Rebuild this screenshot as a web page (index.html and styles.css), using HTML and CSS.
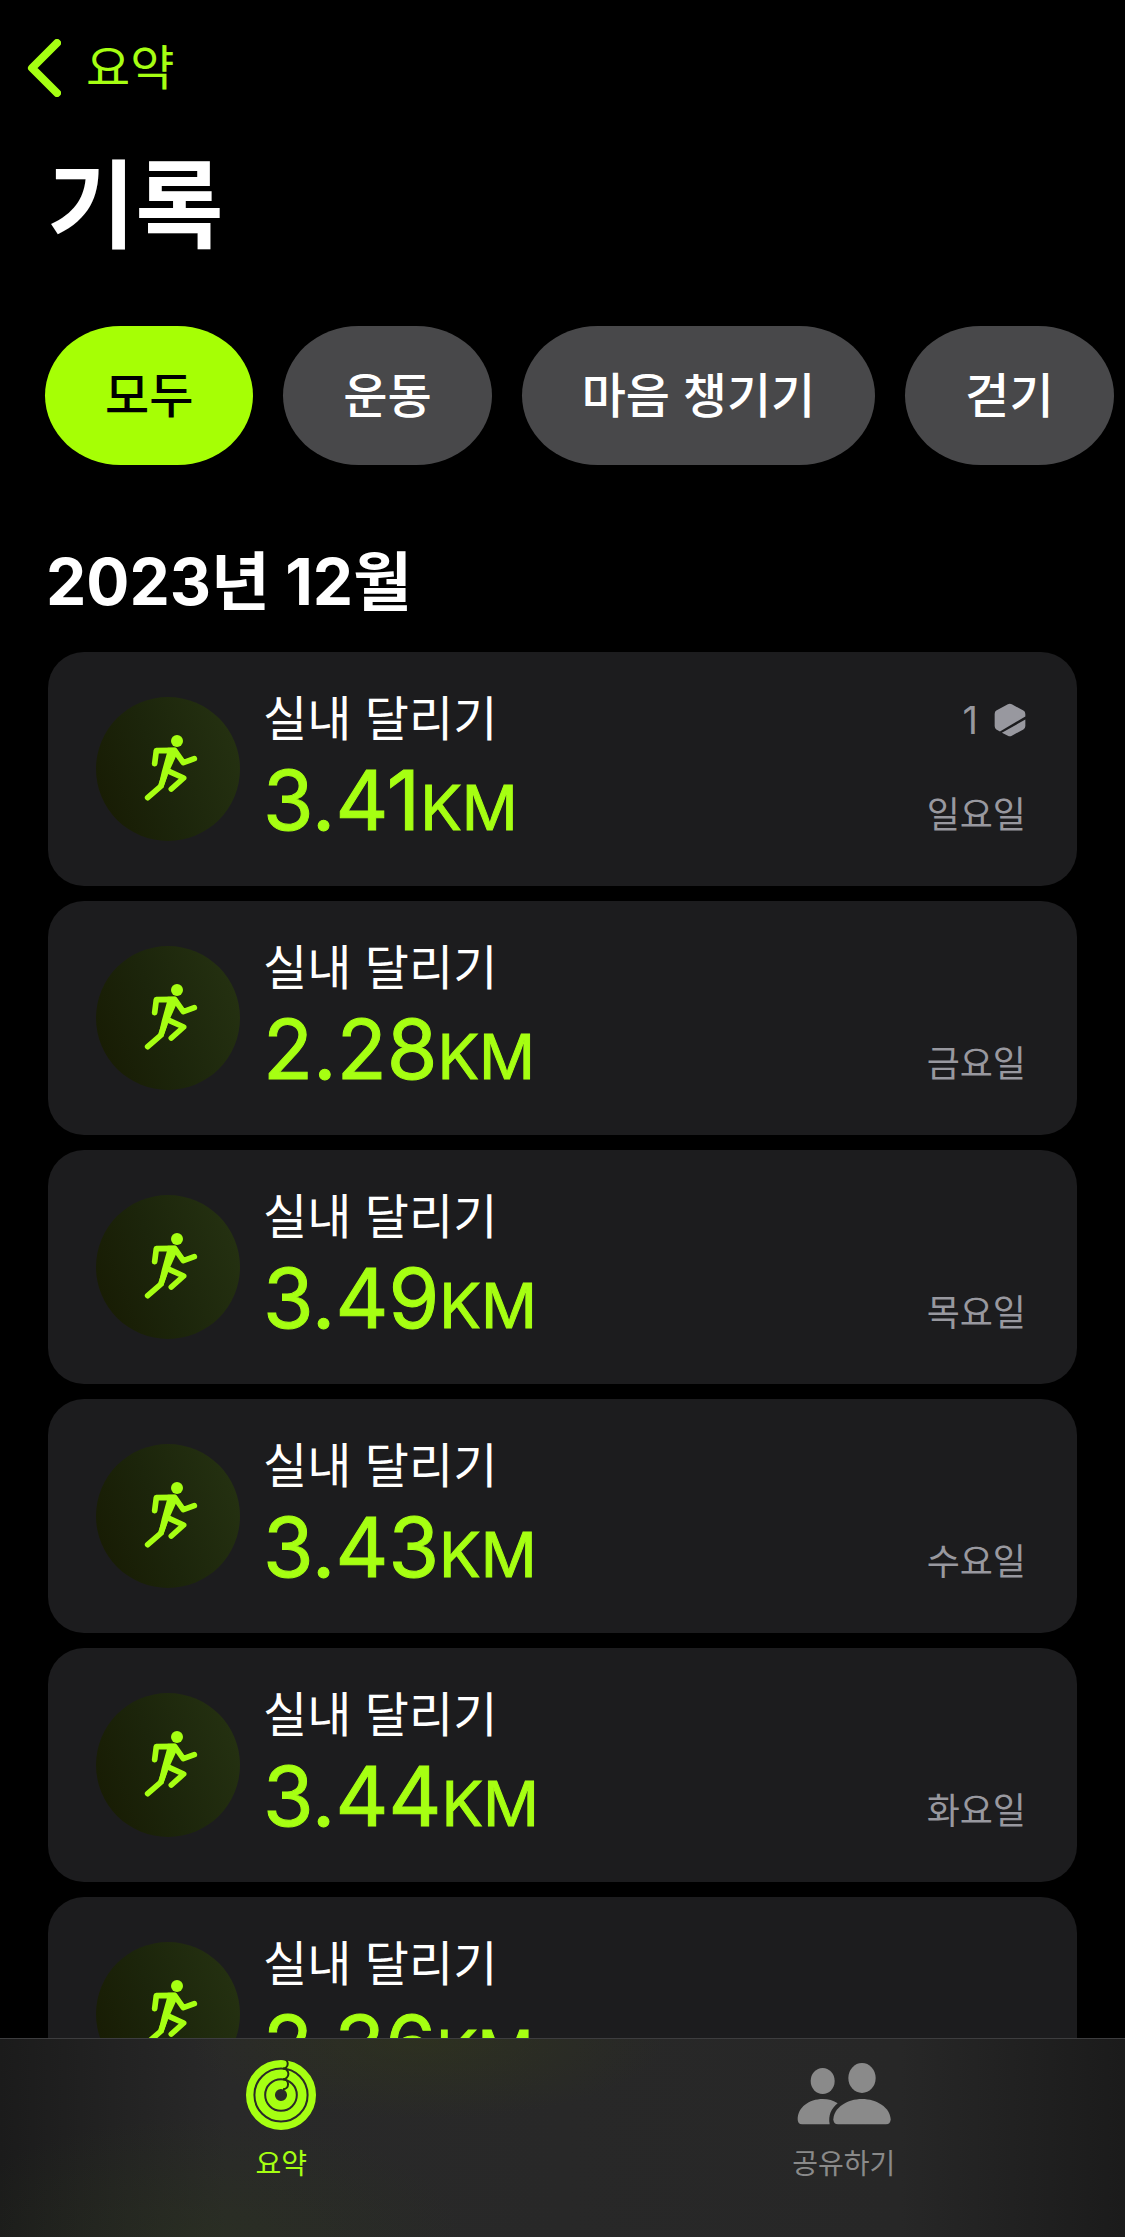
FILE: index.html
```
<!DOCTYPE html>
<html lang="ko">
<head>
    <meta charset="UTF-8">
    <meta name="viewport" content="width=device-width, initial-scale=1.0">
    <title>기록</title>
    <link rel="stylesheet" href="styles.css">
</head>
<body>
    <!-- shared icons -->
    <svg class="sprite" aria-hidden="true">
        <symbol id="runner" viewBox="9 72 210 210">
            <circle cx="141" cy="93" r="18"/>
            <path d="M113 113H137L145 124L115 190L100 234L86 225L95 186L111 128Z"/>
            <path class="limb" d="M74 161L79 122L134 121L160 158L193 146M104 196L92 229L53 263M112 182L161 204L124 237"/>
        </symbol>
    </svg>

    <div class="app">
        <main class="content">
            <nav class="nav">
                <a href="#summary" class="back">
                    <svg class="chevron" viewBox="0 0 34 58"><path d="M30 4L5 29L30 54"/></svg>
                    <span>요약</span>
                </a>
            </nav>

            <h1 class="title">기록</h1>

            <div class="filters">
                <button type="button" class="chip active">모두</button>
                <button type="button" class="chip">운동</button>
                <button type="button" class="chip">마음 챙기기</button>
                <button type="button" class="chip">걷기</button>
            </div>

            <h2 class="month">2023년 12월</h2>

            <ul class="list">
                <li class="card">
                    <div class="icon"><svg viewBox="0 0 70 70"><use href="#runner"/></svg></div>
                    <div class="info">
                        <p class="name">실내 달리기</p>
                        <p class="distance">3.41<span class="unit">KM</span></p>
                    </div>
                    <div class="meta">
                        <span class="award">1
                            <svg viewBox="0 0 97 103">
                                <path d="M42 4Q48 0 54 4L89 23Q95 26 95 33V41L18 86L7 80Q2 77 2 70V33Q2 26 7 23Z"/>
                                <path d="M95 50V70Q95 77 89 80L54 99Q48 103 42 99L24 90Z"/>
                            </svg>
                        </span>
                        <span class="day">일요일</span>
                    </div>
                </li>
                <li class="card">
                    <div class="icon"><svg viewBox="0 0 70 70"><use href="#runner"/></svg></div>
                    <div class="info">
                        <p class="name">실내 달리기</p>
                        <p class="distance">2.28<span class="unit">KM</span></p>
                    </div>
                    <div class="meta"><span class="day">금요일</span></div>
                </li>
                <li class="card">
                    <div class="icon"><svg viewBox="0 0 70 70"><use href="#runner"/></svg></div>
                    <div class="info">
                        <p class="name">실내 달리기</p>
                        <p class="distance">3.49<span class="unit">KM</span></p>
                    </div>
                    <div class="meta"><span class="day">목요일</span></div>
                </li>
                <li class="card">
                    <div class="icon"><svg viewBox="0 0 70 70"><use href="#runner"/></svg></div>
                    <div class="info">
                        <p class="name">실내 달리기</p>
                        <p class="distance">3.43<span class="unit">KM</span></p>
                    </div>
                    <div class="meta"><span class="day">수요일</span></div>
                </li>
                <li class="card">
                    <div class="icon"><svg viewBox="0 0 70 70"><use href="#runner"/></svg></div>
                    <div class="info">
                        <p class="name">실내 달리기</p>
                        <p class="distance">3.44<span class="unit">KM</span></p>
                    </div>
                    <div class="meta"><span class="day">화요일</span></div>
                </li>
                <li class="card">
                    <div class="icon"><svg viewBox="0 0 70 70"><use href="#runner"/></svg></div>
                    <div class="info">
                        <p class="name">실내 달리기</p>
                        <p class="distance">2.36<span class="unit">KM</span></p>
                    </div>
                    <div class="meta"></div>
                </li>
            </ul>
        </main>

        <footer class="tabbar">
            <a href="#summary" class="tab active">
                <svg class="rings" viewBox="37 47 208 208">
                    <circle cx="141" cy="151" r="93" stroke-width="22"/>
                    <circle cx="141" cy="151" r="63" stroke-width="26"/>
                    <circle cx="141" cy="151" r="31" stroke-width="26"/>
                    <path d="M147 44A14 14 0 0 1 147 72A16 16 0 0 1 147 104A15 15 0 0 1 147 134"/>
                </svg>
                <span>요약</span>
            </a>
            <a href="#sharing" class="tab">
                <svg class="people" viewBox="46 51 288 204">
                    <ellipse cx="126" cy="111" rx="36" ry="39"/>
                    <ellipse cx="244" cy="102" rx="41" ry="45"/>
                    <path d="M51 226C51 190 85 165 126 165C143 165 159 169 171 178C152 193 142 215 147 241H64Q51 241 51 226Z"/>
                    <path d="M158 226C160 190 200 165 244 165S328 190 330 226Q330 241 316 241H172Q158 241 158 226Z"/>
                </svg>
                <span>공유하기</span>
            </a>
        </footer>
    </div>
</body>
</html>
```
FILE: styles.css
```
* {
    box-sizing: border-box;
    margin: 0;
    padding: 0;
}

body {
    background-color: #000;
    color: #fff;
    font-family: Inter, "Noto Sans CJK KR", sans-serif;
}

a {
    color: inherit;
    text-decoration: none;
}

.sprite {
    display: none;
}

.app {
    display: flex;
    flex-direction: column;
    height: 100vh;
}

.content {
    flex: 1;
    min-height: 0;
    overflow-x: hidden;
    overflow-y: auto;
    scrollbar-width: none;
}

.nav {
    display: flex;
    align-items: center;
    height: 136px;
    padding: 0 27px;
}

.back {
    display: flex;
    align-items: center;
    gap: 25px;
    color: #a6ff12;
    font-size: 48px;
    line-height: 60px;
}

.chevron {
    width: 34px;
    height: 58px;
    fill: none;
    stroke: #a6ff12;
    stroke-width: 8;
    stroke-linecap: round;
    stroke-linejoin: round;
}

.title {
    padding: 0 47px;
    font-size: 96px;
    font-weight: 700;
    line-height: 138px;
}

.filters {
    display: flex;
    gap: 30px;
    margin-top: 52px;
    padding: 0 45px;
}

.chip {
    flex: none;
    height: 139px;
    padding: 0 60px 7px;
    border: none;
    border-radius: 76px / 70px;
    background-color: #48484a;
    color: #fff;
    font-family: inherit;
    font-size: 48px;
    font-weight: 500;
}

.chip.active {
    background-color: #a6ff05;
    color: #000;
}

.month {
    margin: 77px 0 30px;
    padding: 0 46px;
    font-size: 64px;
    font-weight: 700;
    line-height: 80px;
}

.list {
    display: flex;
    flex-direction: column;
    gap: 15px;
    padding: 0 48px;
    list-style: none;
}

.card {
    display: flex;
    align-items: center;
    gap: 23px;
    height: 234px;
    padding: 0 51px 0 48px;
    border-radius: 36px;
    background-color: #1c1c1e;
}

.icon {
    display: flex;
    flex: none;
    align-items: center;
    justify-content: center;
    width: 144px;
    height: 144px;
    border-radius: 50%;
    background: linear-gradient(70deg, #171a02, #1c250b 45%, #263312);
}

.icon svg {
    width: 70px;
    height: 70px;
    fill: #a6ff12;
}

.limb {
    fill: none;
    stroke: #a6ff12;
    stroke-width: 17;
    stroke-linecap: round;
    stroke-linejoin: round;
}

.info {
    flex: 1;
    padding-top: 6px;
}

.name {
    font-size: 48px;
    font-weight: 400;
    line-height: 60px;
}

.distance {
    margin-top: 4px;
    color: #a6ff12;
    font-size: 82px;
    line-height: 96px;
    -webkit-text-stroke: 1px #a6ff12;
}

.unit {
    font-size: 62px;
}

.meta {
    display: flex;
    flex-direction: column;
    align-items: flex-end;
    align-self: stretch;
    padding: 44px 0 47px;
    color: #98989f;
    font-size: 36px;
    line-height: 48px;
}

.award {
    display: flex;
    align-items: center;
    gap: 16px;
    font-size: 38px;
}

.award svg {
    width: 32px;
    height: 34px;
    fill: #98989f;
}

.day {
    margin-top: auto;
}

.tabbar {
    display: flex;
    flex: none;
    height: 199px;
    border-top: 1px solid #3d3d3f;
    background:
        radial-gradient(ellipse 240px 80px at 38% 0, rgba(52, 60, 20, 0.4), transparent),
        radial-gradient(ellipse 260px 120px at 18% 100%, rgba(44, 54, 28, 0.4), transparent),
        linear-gradient(90deg, #1b1b1b, #292929 20%, #272727 80%, #1b1b1b);
}

.tab {
    display: flex;
    flex: 1;
    flex-direction: column;
    align-items: center;
    gap: 15px;
    padding-top: 21px;
    color: #8a8a8a;
    font-size: 28px;
    line-height: 38px;
}

.tab.active {
    color: #a6ff12;
}

.rings {
    width: 70px;
    height: 70px;
    fill: none;
    stroke: #a6ff12;
}

.rings path {
    stroke: #23300f;
    stroke-width: 6;
}

.people {
    width: 96px;
    height: 70px;
    fill: #8a8a8a;
}
```
